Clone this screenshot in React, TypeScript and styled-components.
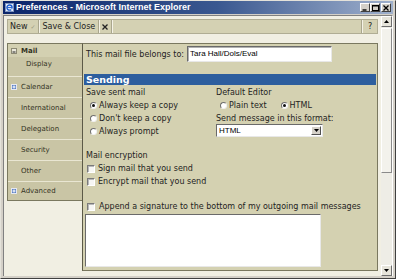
import React from "react";
import styled, { createGlobalStyle } from "styled-components";

const GlobalStyle = createGlobalStyle`
  html, body {
    margin: 0;
    padding: 0;
    background: #d4d0c8;
  }
  body {
    font-family: "DejaVu Sans", Verdana, sans-serif;
  }
  * {
    box-sizing: border-box;
  }
`;

const Window = styled.div`
  width: 396px;
  height: 279px;
  display: flex;
  flex-direction: column;
  background: #d4d0c8;
  border: 1px solid;
  border-color: #e4e2da #404040 #404040 #e4e2da;
  padding: 0 2px 2px 2px;
  overflow: hidden;
`;

const TitleBar = styled.div`
  height: 13px;
  flex: none;
  display: flex;
  align-items: center;
  gap: 2px;
  padding-left: 2px;
  background: linear-gradient(to right, #0a246a 0%, #3a5890 55%, #9fb0cc 100%);
`;

const TitleText = styled.span`
  color: #fff;
  font-family: "Liberation Sans Narrow", "Liberation Sans", Arial, sans-serif;
  font-weight: bold;
  font-size: 9px;
  line-height: 13px;
  white-space: nowrap;
`;

const WindowControls = styled.div`
  margin-left: auto;
  margin-right: 2px;
  display: flex;
`;

const CaptionButton = styled.div<{ $gap?: boolean }>`
  width: 10px;
  height: 9px;
  margin-left: ${(p) => (p.$gap ? "1px" : "0")};
  background: #d4d0c8;
  border: 1px solid;
  border-color: #fff #404040 #404040 #fff;
  display: flex;
  align-items: center;
  justify-content: center;
`;

const Client = styled.div`
  flex: 1;
  display: flex;
  margin-top: 1px;
  border-top: 1px solid #808080;
  border-left: 1px solid #808080;
  border-right: 1px solid #fff;
  min-height: 0;
`;

const Document = styled.div`
  flex: 1;
  display: flex;
  flex-direction: column;
  background: #f1efe3;
  padding: 3px 3px 5px 3px;
`;

const Toolbar = styled.div`
  height: 15px;
  flex: none;
  display: flex;
  align-items: center;
  padding-left: 2px;
  background: #d4d1b3;
  border: 1px solid #b0ad94;
  font-size: 8px;
  color: #222;
`;

const ToolButton = styled.div<{ $first?: boolean }>`
  display: flex;
  align-items: center;
  gap: 3px;
  height: 100%;
  padding: 0 3px 0 ${(p) => (p.$first ? "0" : "2px")};
  white-space: nowrap;
`;

const ToolCheck = styled.span`
  color: #9c9a80;
  font-size: 6px;
`;

const ToolSeparator = styled.div<{ $push?: boolean }>`
  width: 2px;
  height: 100%;
  margin-left: ${(p) => (p.$push ? "auto" : "0")};
  border-left: 1px solid #a9a68d;
  border-right: 1px solid #f4f2e6;
`;

const HelpButton = styled.div`
  width: 14px;
  text-align: center;
  font-size: 8px;
`;

const Main = styled.div`
  flex: 1;
  display: flex;
  margin-top: 9px;
  min-height: 0;
`;

const Nav = styled.div`
  width: 75px;
  flex: none;
  display: flex;
  flex-direction: column;
`;

const NavBox = styled.div`
  background: #c9c5a5;
  border: 1px solid #7a785f;
  border-right: none;
  display: flex;
  flex-direction: column;
`;

const NavGroup = styled.div`
  padding-bottom: 6px;
`;

const NavItem = styled.div<{ $height: number; $selected?: boolean; $sub?: boolean; $divider?: boolean }>`
  height: ${(p) => p.$height}px;
  display: flex;
  align-items: center;
  gap: 4px;
  padding-left: ${(p) => (p.$sub ? "8px" : "3px")};
  border-top: ${(p) => (p.$divider ? "1px solid #e9e6d2" : "none")};
  background: ${(p) => (p.$selected ? "#d3d0b1" : "transparent")};
  font-size: 7px;
  font-weight: ${(p) => (p.$selected ? "bold" : "normal")};
  color: #33331f;
  white-space: nowrap;
`;

const IconSlot = styled.span`
  width: 6px;
  height: 6px;
  flex: none;
  display: flex;
`;

const Panel = styled.div`
  flex: 1;
  display: flex;
  flex-direction: column;
  background: #d4d1b1;
  border: 1px solid #7a785f;
  border-left-color: #5c5a48;
`;

const FileRow = styled.div`
  display: flex;
  align-items: center;
  gap: 3px;
  height: 16px;
  margin-top: 2px;
  padding-left: 3px;
`;

const Text = styled.span`
  font-size: 8px;
  line-height: 13px;
  color: #1e1e1e;
  white-space: nowrap;
`;

const TextBox = styled.div`
  width: 145px;
  height: 16px;
  background: #fff;
  border: 1px solid;
  border-color: #6a6a6a #e8e8e8 #e8e8e8 #6a6a6a;
  box-shadow: inset 1px 1px 0 #b0b0b0;
  padding-left: 2px;
  font-family: "Liberation Sans", Arial, sans-serif;
  font-size: 8px;
  line-height: 14px;
  color: #000;
`;

const SectionBar = styled.div`
  height: 11px;
  margin: 12px 1px 0 1px;
  padding-left: 2px;
  background: #2d5e9e;
  color: #fff;
  font-size: 9.5px;
  font-weight: bold;
  line-height: 11px;
`;

const Columns = styled.div`
  display: flex;
  padding-top: 1px;
  padding-left: 3px;
`;

const Column = styled.div<{ $width?: number }>`
  width: ${(p) => (p.$width ? `${p.$width}px` : "auto")};
  display: flex;
  flex-direction: column;
`;

const Row = styled.div<{ $indent?: number; $gap?: number; $top?: number }>`
  height: 13px;
  display: flex;
  align-items: center;
  gap: ${(p) => p.$gap ?? 2}px;
  padding-left: ${(p) => p.$indent ?? 0}px;
  margin-top: ${(p) => p.$top ?? 0}px;
`;

const Option = styled.span<{ $gap?: number }>`
  display: flex;
  align-items: center;
  gap: 2px;
  margin-right: ${(p) => p.$gap ?? 0}px;
`;

const Radio = styled.span<{ $checked?: boolean }>`
  position: relative;
  width: 7px;
  height: 7px;
  flex: none;
  border-radius: 50%;
  background: #fff;
  border: 1px solid;
  border-color: #6e6e6e #f0f0f0 #f0f0f0 #6e6e6e;
  &::after {
    content: "";
    position: absolute;
    left: 1px;
    top: 1px;
    width: 3px;
    height: 3px;
    border-radius: 50%;
    background: #111;
    display: ${(p) => (p.$checked ? "block" : "none")};
  }
`;

const Checkbox = styled.span`
  width: 8px;
  height: 8px;
  flex: none;
  background: #f6f6f4;
  border: 1px solid;
  border-color: #7a7a7a #ffffff #ffffff #7a7a7a;
  box-shadow: inset 1px 1px 0 #b8b8b8;
`;

const Select = styled.div`
  width: 107px;
  height: 13px;
  display: flex;
  align-items: center;
  background: #fff;
  border: 1px solid;
  border-color: #6a6a6a #e8e8e8 #e8e8e8 #6a6a6a;
  padding: 0 1px 0 2px;
  font-family: "Liberation Sans", Arial, sans-serif;
  font-size: 8px;
  color: #000;
`;

const SelectArrow = styled.span`
  margin-left: auto;
  width: 10px;
  height: 9px;
  background: #d4d0c8;
  border: 1px solid;
  border-color: #fff #505050 #505050 #fff;
  display: flex;
  align-items: center;
  justify-content: center;
`;

const Block = styled.div<{ $top: number }>`
  display: flex;
  flex-direction: column;
  margin-top: ${(p) => p.$top}px;
  padding-left: 3px;
`;

const TextArea = styled.div`
  width: 236px;
  height: 53px;
  margin: 1px 0 0 2px;
  background: #fff;
  border: 1px solid;
  border-color: #6a6a6a #e8e8e8 #e8e8e8 #6a6a6a;
`;

const Scrollbar = styled.div`
  width: 11px;
  flex: none;
  display: flex;
  flex-direction: column;
  background: #eeede6;
`;

const ScrollButton = styled.div<{ $bottom?: boolean }>`
  height: 11px;
  margin-top: ${(p) => (p.$bottom ? "auto" : "0")};
  background: #e6e4da;
  border: 1px solid;
  border-color: #fff #6e6e6e #6e6e6e #fff;
  display: flex;
  align-items: center;
  justify-content: center;
`;

const ScrollThumb = styled.div`
  height: 145px;
  margin-top: 1px;
  background: #f3f2ec;
  border: 1px solid;
  border-color: #fff #8a8a8a #8a8a8a #fff;
`;

const Arrow = ({ up }: { up?: boolean }) => (
  <svg width="5" height="3" viewBox="0 0 5 3">
    <path d={up ? "M2.5 0L5 3H0Z" : "M0 0H5L2.5 3Z"} fill="#000" />
  </svg>
);

const IeIcon = () => (
  <svg width="9" height="9" viewBox="0 0 9 9">
    <rect x="0.5" y="0.5" width="8" height="8" fill="#e8eef8" stroke="#7d93c0" />
    <circle cx="4.5" cy="4.6" r="2.6" fill="none" stroke="#1c5ccf" strokeWidth="1.3" />
    <path d="M2.2 4.6H6.9" stroke="#1c5ccf" strokeWidth="1" />
    <path d="M5.8 6.2L7.6 6.2" stroke="#e8eef8" strokeWidth="1.2" />
  </svg>
);

const ExpandIcon = ({ open }: { open?: boolean }) =>
  open ? (
    <svg width="6" height="6" viewBox="0 0 6 6">
      <rect x="0.5" y="0.5" width="5" height="5" fill="#e9e7da" stroke="#8d8a74" />
      <path d="M1.5 4H4.5" stroke="#222" />
    </svg>
  ) : (
    <svg width="6" height="6" viewBox="0 0 6 6">
      <rect x="0.5" y="0.5" width="5" height="5" fill="#5f83c6" stroke="#e6e8f0" />
      <path d="M1.5 3H4.5M3 1.5V4.5" stroke="#fff" />
    </svg>
  );

const navItems = ["Calendar", "International", "Delegation", "Security", "Other", "Advanced"];
const expandable = ["Calendar", "Advanced"];

export default function App() {
  return (
    <>
      <GlobalStyle />
      <Window>
        <TitleBar>
          <IeIcon />
          <TitleText>Preferences - Microsoft Internet Explorer</TitleText>
          <WindowControls>
            <CaptionButton>
              <svg width="6" height="6" viewBox="0 0 6 6">
                <path d="M0.5 5H4.5" stroke="#000" strokeWidth="1.4" />
              </svg>
            </CaptionButton>
            <CaptionButton>
              <svg width="7" height="6" viewBox="0 0 7 6">
                <rect x="0.5" y="0.5" width="6" height="5" fill="none" stroke="#000" />
                <path d="M0.5 1H6.5" stroke="#000" />
              </svg>
            </CaptionButton>
            <CaptionButton $gap>
              <svg width="6" height="6" viewBox="0 0 6 6">
                <path d="M0.5 0.5L5.5 5.5M5.5 0.5L0.5 5.5" stroke="#000" strokeWidth="1.3" />
              </svg>
            </CaptionButton>
          </WindowControls>
        </TitleBar>
        <Client>
          <Document>
            <Toolbar>
              <ToolButton $first>
                New <ToolCheck>✓</ToolCheck>
              </ToolButton>
              <ToolSeparator />
              <ToolButton>Save &amp; Close</ToolButton>
              <ToolSeparator />
              <ToolButton>
                <svg width="6" height="6" viewBox="0 0 6 6">
                  <path d="M0.5 0.5L5.5 5.5M5.5 0.5L0.5 5.5" stroke="#222" strokeWidth="1.3" />
                </svg>
              </ToolButton>
              <ToolSeparator />
              <ToolSeparator $push />
              <HelpButton>?</HelpButton>
            </Toolbar>
            <Main>
              <Nav>
                <NavBox>
                  <NavGroup>
                    <NavItem $height={13} $selected>
                      <IconSlot>
                        <ExpandIcon open />
                      </IconSlot>
                      Mail
                    </NavItem>
                    <NavItem $height={13} $sub>
                      <IconSlot />
                      Display
                    </NavItem>
                  </NavGroup>
                  {navItems.map((item, i) => (
                    <NavItem key={item} $height={i === navItems.length - 1 ? 19 : 21} $divider>
                      <IconSlot>{expandable.includes(item) && <ExpandIcon />}</IconSlot>
                      {item}
                    </NavItem>
                  ))}
                </NavBox>
              </Nav>
              <Panel>
                <FileRow>
                  <Text>This mail file belongs to:</Text>
                  <TextBox>Tara Hall/Dols/Eval</TextBox>
                </FileRow>
                <SectionBar>Sending</SectionBar>
                <Columns>
                  <Column $width={130}>
                    <Row>
                      <Text>Save sent mail</Text>
                    </Row>
                    <Row $indent={4}>
                      <Radio $checked />
                      <Text>Always keep a copy</Text>
                    </Row>
                    <Row $indent={4}>
                      <Radio />
                      <Text>Don't keep a copy</Text>
                    </Row>
                    <Row $indent={4}>
                      <Radio />
                      <Text>Always prompt</Text>
                    </Row>
                  </Column>
                  <Column>
                    <Row>
                      <Text>Default Editor</Text>
                    </Row>
                    <Row $indent={4} $gap={0}>
                      <Option $gap={14}>
                        <Radio />
                        <Text>Plain text</Text>
                      </Option>
                      <Option>
                        <Radio $checked />
                        <Text>HTML</Text>
                      </Option>
                    </Row>
                    <Row>
                      <Text>Send message in this format:</Text>
                    </Row>
                    <Row $top={-1}>
                      <Select>
                        HTML
                        <SelectArrow>
                          <Arrow />
                        </SelectArrow>
                      </Select>
                    </Row>
                  </Column>
                </Columns>
                <Block $top={11}>
                  <Row>
                    <Text>Mail encryption</Text>
                  </Row>
                  <Row $indent={1} $gap={3}>
                    <Checkbox />
                    <Text>Sign mail that you send</Text>
                  </Row>
                  <Row $indent={1} $gap={3}>
                    <Checkbox />
                    <Text>Encrypt mail that you send</Text>
                  </Row>
                </Block>
                <Block $top={12}>
                  <Row $indent={1} $gap={4}>
                    <Checkbox />
                    <Text>Append a signature to the bottom of my outgoing mail messages</Text>
                  </Row>
                </Block>
                <TextArea />
              </Panel>
            </Main>
          </Document>
          <Scrollbar>
            <ScrollButton>
              <Arrow up />
            </ScrollButton>
            <ScrollThumb />
            <ScrollButton $bottom>
              <Arrow />
            </ScrollButton>
          </Scrollbar>
        </Client>
      </Window>
    </>
  );
}
